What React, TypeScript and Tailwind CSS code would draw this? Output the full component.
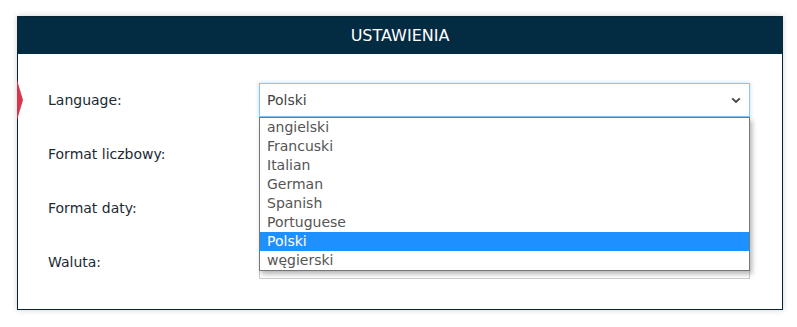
import React from "react";

const labels = ["Language:", "Format liczbowy:", "Format daty:", "Waluta:"];
const languages = ["angielski", "Francuski", "Italian", "German", "Spanish", "Portuguese", "Polski", "węgierski"];

function Chevron() {
  return (
    <svg width="10" height="7" viewBox="0 0 10 7" className="text-[#444]">
      <path d="M1.2 1.3 L5 5 L8.8 1.3" fill="none" stroke="currentColor" strokeWidth="1.8" />
    </svg>
  );
}

export default function App() {
  return (
    <div className="h-[327px] w-[797px] bg-white pl-[17px] pt-[16px] font-['DejaVu_Sans',sans-serif]">
      <div className="relative h-[294px] w-[766px] border border-[#0b2433] bg-white shadow-[0_0_6px_rgba(0,0,0,0.18)]">
        <div className="flex h-[37px] items-center justify-center bg-[#032b42] text-[16px] text-white">
          USTAWIENIA
        </div>

        {/* red ribbon tip on the left edge */}
        <svg className="absolute left-[-1px] top-[63px]" width="7" height="40" viewBox="0 0 7 40">
          <path d="M0 0 L6 20 L0 40 Z" fill="#d8344c" />
        </svg>

        <div className="flex flex-col gap-5 pl-[30px] pr-[32px] pt-[29px]">
          {labels.map((label, i) => (
            <div key={label} className="flex h-[34px] items-center">
              <div className="w-[211px] text-[14px] text-[#1b2a33]">{label}</div>
              {i === 0 ? (
                <div className="relative h-[34px] flex-1">
                  <div className="flex h-full items-center justify-between border border-[#8cc4f0] pl-[7px] pr-[8px] text-[14px] text-[#444] shadow-[0_0_4px_rgba(100,170,240,0.45)]">
                    <span>Polski</span>
                    <Chevron />
                  </div>
                  <div className="absolute left-0 right-0 top-[34px] z-10 border border-[#777] bg-white shadow-[2px_3px_5px_rgba(0,0,0,0.3)]">
                    {languages.map((lang) => (
                      <div
                        key={lang}
                        className={
                          lang === "Polski"
                            ? "flex h-[19px] items-center bg-[#1e90ff] pl-[7px] text-[14px] text-white"
                            : "flex h-[19px] items-center pl-[7px] text-[14px] text-[#555]"
                        }
                      >
                        {lang}
                      </div>
                    ))}
                  </div>
                </div>
              ) : (
                <div className="flex h-[34px] flex-1 items-center justify-end border border-[#ccc] pr-[8px]">
                  <Chevron />
                </div>
              )}
            </div>
          ))}
        </div>
      </div>
    </div>
  );
}
